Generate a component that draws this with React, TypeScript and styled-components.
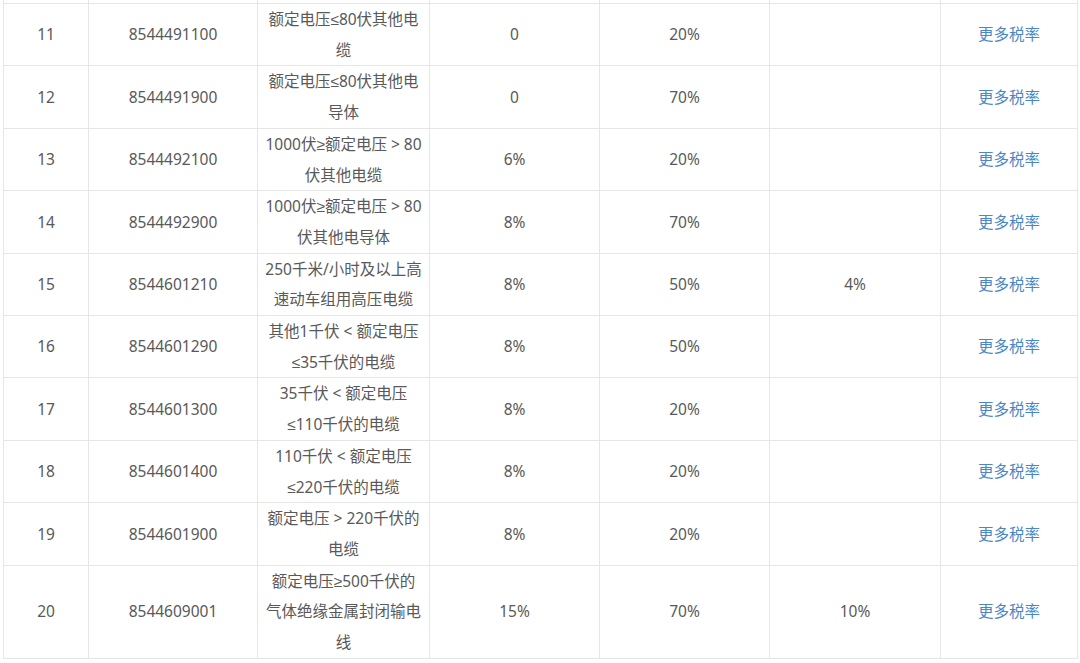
import React from "react";
import styled, { createGlobalStyle } from "styled-components";

const GlobalStyle = createGlobalStyle`
  html, body {
    margin: 0;
    padding: 0;
    background: #ffffff;
    overflow: hidden;
  }
`;

const Page = styled.div`
  width: 1080px;
  height: 663px;
  overflow: hidden;
  padding-left: 3px;
  box-sizing: border-box;
  font-family: "Noto Sans", "Liberation Sans", "Noto Sans CJK SC", sans-serif;
`;

const Table = styled.table`
  border-collapse: collapse;
  table-layout: fixed;
  width: 1074px;
  margin-top: -59px;
  color: #595959;
  font-size: 15.5px;
  line-height: 30.7px;
`;

const Row = styled.tr<{ $filler?: boolean }>`
  height: ${({ $filler }) => ($filler ? "62px" : "auto")};
`;

const Cell = styled.td`
  border: 1px solid #e6e6e6;
  text-align: center;
  vertical-align: middle;
  padding: 0 4px;
  white-space: pre;
`;

const RateLink = styled.a`
  color: #4a87c6;
  text-decoration: none;
  cursor: pointer;
`;

type Item = {
  no: number;
  code: string;
  name: string[];
  mfn: string;
  general: string;
  extra?: string;
};

const rows: Item[] = [
  { no: 11, code: "8544491100", name: ["额定电压≤80伏其他电", "缆"], mfn: "0", general: "20%" },
  { no: 12, code: "8544491900", name: ["额定电压≤80伏其他电", "导体"], mfn: "0", general: "70%" },
  { no: 13, code: "8544492100", name: ["1000伏≥额定电压 > 80", "伏其他电缆"], mfn: "6%", general: "20%" },
  { no: 14, code: "8544492900", name: ["1000伏≥额定电压 > 80", "伏其他电导体"], mfn: "8%", general: "70%" },
  { no: 15, code: "8544601210", name: ["250千米/小时及以上高", "速动车组用高压电缆"], mfn: "8%", general: "50%", extra: "4%" },
  { no: 16, code: "8544601290", name: ["其他1千伏 < 额定电压", "≤35千伏的电缆"], mfn: "8%", general: "50%" },
  { no: 17, code: "8544601300", name: ["35千伏 < 额定电压", "≤110千伏的电缆"], mfn: "8%", general: "20%" },
  { no: 18, code: "8544601400", name: ["110千伏 < 额定电压", "≤220千伏的电缆"], mfn: "8%", general: "20%" },
  { no: 19, code: "8544601900", name: ["额定电压 > 220千伏的", "电缆"], mfn: "8%", general: "20%" },
  { no: 20, code: "8544609001", name: ["额定电压≥500千伏的", "气体绝缘金属封闭输电", "线"], mfn: "15%", general: "70%", extra: "10%" },
];

const widths = [85, 169, 172, 170, 170, 171, 137];

export default function App() {
  return (
    <>
      <GlobalStyle />
      <Page>
        <Table>
          <colgroup>
            {widths.map((w, i) => (
              <col key={i} style={{ width: w }} />
            ))}
          </colgroup>
          <tbody>
            <Row $filler>
              {widths.map((_, i) => (
                <Cell key={i} />
              ))}
            </Row>
            {rows.map((r) => (
              <Row key={r.no}>
                <Cell>{r.no}</Cell>
                <Cell>{r.code}</Cell>
                <Cell>
                  {r.name.map((line, i) => (
                    <React.Fragment key={i}>
                      {i > 0 && <br />}
                      {line}
                    </React.Fragment>
                  ))}
                </Cell>
                <Cell>{r.mfn}</Cell>
                <Cell>{r.general}</Cell>
                <Cell>{r.extra ?? ""}</Cell>
                <Cell>
                  <RateLink>更多税率</RateLink>
                </Cell>
              </Row>
            ))}
          </tbody>
        </Table>
      </Page>
    </>
  );
}
